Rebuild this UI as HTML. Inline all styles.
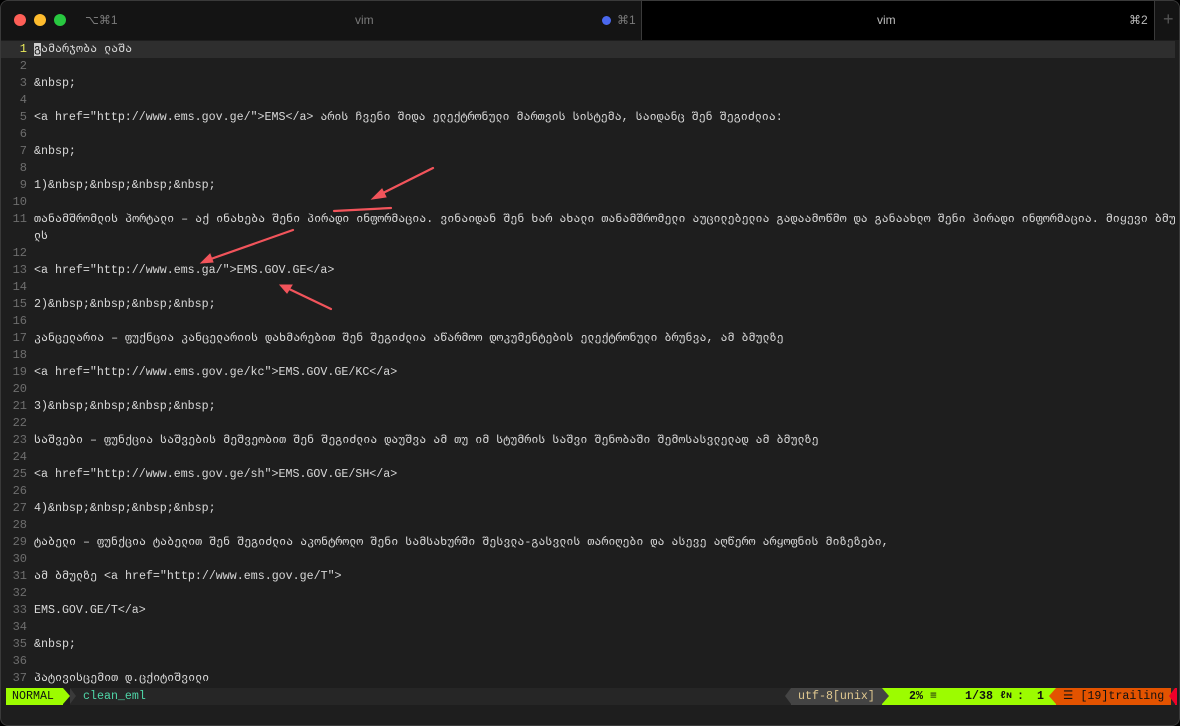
<!DOCTYPE html>
<html><head><meta charset="utf-8"><style>
*{margin:0;padding:0;box-sizing:border-box}
body{width:1180px;height:726px;background:#000;overflow:hidden;font-family:"Liberation Mono","DejaVu Sans Mono",monospace;position:relative}
#win{position:absolute;left:0;top:0;width:1180px;height:726px;border:1px solid #3a3a3a;border-radius:8px;background:#1e1e1e;overflow:hidden}
#title{position:absolute;left:0;top:0;width:1180px;height:39px;background:#141414}
.dot{position:absolute;top:13px;width:12px;height:12px;border-radius:50%}
.t{position:absolute;font-family:"Liberation Sans","DejaVu Sans",sans-serif;font-size:12px;color:#7a7a7a;top:12px}
#tab2{position:absolute;left:640px;top:0;width:514px;height:39px;background:#000;border-left:1px solid #3a3a3a;border-right:1px solid #3a3a3a}
#ed{position:absolute;left:0;top:40px;width:1174px;height:646px;background:#1e1e1e}
.r{position:absolute;left:0;height:17px;width:1174px;font-size:11.65px;line-height:17px;color:#d8d8d8;white-space:pre;overflow:hidden}
.n{display:inline-block;width:26px;text-align:right;color:#6e6e6e;margin-right:7px;font-size:12px}
.cur{background:#2e2e2e}
.cur .n{color:#e8e85a}
#sl{position:absolute;left:0;top:687px;width:1180px;height:17px;font-size:11.65px;line-height:17px;white-space:pre}
#sl div{position:absolute;top:0}
</style></head><body><div id="win">
<div id="title">
<div class="dot" style="left:13px;background:#fe5f57"></div>
<div class="dot" style="left:33px;background:#febc2e"></div>
<div class="dot" style="left:53px;background:#28c840"></div>
<div class="t" style="left:84px">⌥⌘1</div>
<div class="t" style="left:354px">vim</div>
<div style="position:absolute;left:601px;top:15px;width:9px;height:9px;border-radius:50%;background:#4a68ee"></div>
<div class="t" style="left:616px">⌘1</div>
<div id="tab2"></div>
<div class="t" style="left:876px;color:#bbb">vim</div>
<div class="t" style="left:1128px;color:#bbb">⌘2</div>
<div class="t" style="left:1162px;top:8px;font-size:18px;color:#555">+</div>
</div>
<div id="ed">
<div class="r cur" style="top:0"><span class="n">1</span><span style="background:#ccc;color:#111">გ</span>ამარჯობა ლაშა</div>
<div class="r" style="top:17px"><span class="n">2</span></div>
<div class="r" style="top:34px"><span class="n">3</span>&amp;nbsp;</div>
<div class="r" style="top:51px"><span class="n">4</span></div>
<div class="r" style="top:68px"><span class="n">5</span>&lt;a href="http://www.ems.gov.ge/"&gt;EMS&lt;/a&gt; არის ჩვენი შიდა ელექტრონული მართვის სისტემა, საიდანც შენ შეგიძლია:</div>
<div class="r" style="top:85px"><span class="n">6</span></div>
<div class="r" style="top:102px"><span class="n">7</span>&amp;nbsp;</div>
<div class="r" style="top:119px"><span class="n">8</span></div>
<div class="r" style="top:136px"><span class="n">9</span>1)&amp;nbsp;&amp;nbsp;&amp;nbsp;&amp;nbsp;</div>
<div class="r" style="top:153px"><span class="n">10</span></div>
<div class="r" style="top:170px"><span class="n">11</span>თანამშრომლის პორტალი – აქ ინახება შენი პირადი ინფორმაცია. ვინაიდან შენ ხარ ახალი თანამშრომელი აუცილებელია გადაამოწმო და განაახლო შენი პირადი ინფორმაცია. მიყევი ბმუ</div>
<div class="r" style="top:187px"><span class="n"></span>ლს</div>
<div class="r" style="top:204px"><span class="n">12</span></div>
<div class="r" style="top:221px"><span class="n">13</span>&lt;a href="http://www.ems.ga/"&gt;EMS.GOV.GE&lt;/a&gt;</div>
<div class="r" style="top:238px"><span class="n">14</span></div>
<div class="r" style="top:255px"><span class="n">15</span>2)&amp;nbsp;&amp;nbsp;&amp;nbsp;&amp;nbsp;</div>
<div class="r" style="top:272px"><span class="n">16</span></div>
<div class="r" style="top:289px"><span class="n">17</span>კანცელარია – ფუქნცია კანცელარიის დახმარებით შენ შეგიძლია აწარმოო დოკუმენტების ელექტრონული ბრუნვა, ამ ბმულზე</div>
<div class="r" style="top:306px"><span class="n">18</span></div>
<div class="r" style="top:323px"><span class="n">19</span>&lt;a href="http://www.ems.gov.ge/kc"&gt;EMS.GOV.GE/KC&lt;/a&gt;</div>
<div class="r" style="top:340px"><span class="n">20</span></div>
<div class="r" style="top:357px"><span class="n">21</span>3)&amp;nbsp;&amp;nbsp;&amp;nbsp;&amp;nbsp;</div>
<div class="r" style="top:374px"><span class="n">22</span></div>
<div class="r" style="top:391px"><span class="n">23</span>საშვები – ფუნქცია საშვების მეშვეობით შენ შეგიძლია დაუშვა ამ თუ იმ სტუმრის საშვი შენობაში შემოსასვლელად ამ ბმულზე</div>
<div class="r" style="top:408px"><span class="n">24</span></div>
<div class="r" style="top:425px"><span class="n">25</span>&lt;a href="http://www.ems.gov.ge/sh"&gt;EMS.GOV.GE/SH&lt;/a&gt;</div>
<div class="r" style="top:442px"><span class="n">26</span></div>
<div class="r" style="top:459px"><span class="n">27</span>4)&amp;nbsp;&amp;nbsp;&amp;nbsp;&amp;nbsp;</div>
<div class="r" style="top:476px"><span class="n">28</span></div>
<div class="r" style="top:493px"><span class="n">29</span>ტაბელი – ფუნქცია ტაბელით შენ შეგიძლია აკონტროლო შენი სამსახურში შესვლა-გასვლის თარიღები და ასევე აღწერო არყოფნის მიზეზები,</div>
<div class="r" style="top:510px"><span class="n">30</span></div>
<div class="r" style="top:527px"><span class="n">31</span>ამ ბმულზე &lt;a href="http://www.ems.gov.ge/T"&gt;</div>
<div class="r" style="top:544px"><span class="n">32</span></div>
<div class="r" style="top:561px"><span class="n">33</span>EMS.GOV.GE/T&lt;/a&gt;</div>
<div class="r" style="top:578px"><span class="n">34</span></div>
<div class="r" style="top:595px"><span class="n">35</span>&amp;nbsp;</div>
<div class="r" style="top:612px"><span class="n">36</span></div>
<div class="r" style="top:629px"><span class="n">37</span>პატივისცემით დ.ცქიტიშვილი</div>
</div>
<svg style="position:absolute;left:0;top:0" width="1180" height="726">
<g stroke="#f2545b" stroke-width="2.2" fill="#f2545b" stroke-linecap="round">
<line x1="432" y1="167" x2="378" y2="194"/><polygon points="371,198 381,188 385,196" stroke-width="1"/>
<line x1="333" y1="210" x2="390" y2="207"/>
<line x1="292" y1="229" x2="207" y2="259"/><polygon points="200,262 209,253 212,261" stroke-width="1"/>
<line x1="330" y1="308" x2="286" y2="287"/><polygon points="279,284 291,284 286,292" stroke-width="1"/>
</g></svg>
<div id="sl">
<div style="left:69px;width:1105px;height:17px;background:#262626"></div>
<div style="left:5px;width:57px;height:17px;background:#9cfc00;color:#111;padding-left:6px">NORMAL</div>
<div style="left:62px;width:0;height:0;border-top:8.5px solid transparent;border-bottom:8.5px solid transparent;border-left:7px solid #9cfc00"></div>
<div style="left:69px;width:0;height:0;border-top:8.5px solid transparent;border-bottom:8.5px solid transparent;border-left:6px solid #3a3a3a"></div>
<div style="left:82px;color:#4fd6a8">clean_eml</div>
<div style="left:784px;width:0;height:0;border-top:8.5px solid transparent;border-bottom:8.5px solid transparent;border-right:6px solid #444"></div>
<div style="left:790px;width:91px;height:17px;background:#444;color:#e0c890;padding-left:7px">utf-8[unix]</div>
<div style="left:881px;width:174px;height:17px;background:#9cfc00"></div>
<div style="left:908px;color:#111;font-weight:bold">2% ≡</div>
<div style="left:964px;color:#111;font-weight:bold">1/38</div>
<div style="left:999px;color:#111;font-weight:bold;font-size:10px">ℓɴ</div>
<div style="left:1016px;color:#111;font-weight:bold">:</div>
<div style="left:1036px;color:#111;font-weight:bold">1</div>
<div style="left:881px;width:0;height:0;border-top:8.5px solid transparent;border-bottom:8.5px solid transparent;border-left:7px solid #444"></div>
<div style="left:1055px;width:115px;height:17px;background:#e35300;color:#111;padding-left:7px">☰ [19]trailing</div>
<div style="left:1048px;width:0;height:0;border-top:8.5px solid transparent;border-bottom:8.5px solid transparent;border-right:7px solid #e35300"></div>
<div style="left:1168px;width:0;height:0;border-top:8.5px solid transparent;border-bottom:8.5px solid transparent;border-right:6px solid #f0002a"></div>
<div style="left:1174px;width:2px;height:17px;background:#f0002a"></div>
</div>
</div></body></html>
